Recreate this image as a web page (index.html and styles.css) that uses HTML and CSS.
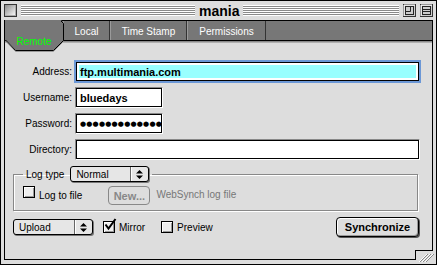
FILE: index.html
```html
<!DOCTYPE html>
<html lang="en">
  <head>
    <meta charset="UTF-8" />
    <title>mania</title>
    <link rel="stylesheet" href="styles.css">
  </head>
  <body>
    <div class="window">
      <div class="titlebar">
        <span class="closebox"></span>
        <span class="stripes left"></span>
        <span class="title">mania</span>
        <span class="stripes right"></span>
        <svg class="winbtn" width="13" height="13" viewBox="0 0 13 13">
          <rect x="0.5" y="0.5" width="12" height="12" fill="#ccc" stroke="#333" />
          <path d="M1 1h11M1 1v11" stroke="#fff" />
          <rect x="2.5" y="2.5" width="8" height="8" fill="none" stroke="#222" />
          <path d="M2.5 7.5h5v-5" fill="none" stroke="#222" />
        </svg>
        <svg class="winbtn" width="13" height="13" viewBox="0 0 13 13">
          <rect x="0.5" y="0.5" width="12" height="12" fill="#ccc" stroke="#333" />
          <path d="M1 1h11M1 1v11" stroke="#fff" />
          <rect x="2.5" y="2.5" width="8" height="8" fill="none" stroke="#222" />
          <path d="M2.5 5.5h8M2.5 7.5h8" stroke="#222" />
        </svg>
      </div>

      <div class="frame">
        <div class="tabs">
          <div class="tab active">
            <svg class="tab-shape" width="60" height="32" viewBox="0 0 60 32">
              <polygon points="0,-1 56,-1 58.5,2 58.5,19.5 48.5,29.5 10.5,29.5 0,19" fill="#777" />
              <polyline points="0.5,19 10.5,29.5 48.5,29.5 58.5,19.5 58.5,2.5 56,0" fill="none" stroke="#000" />
              <polyline points="1,20.5 10.5,30.5 48.5,30.5 57.5,21.5" fill="none" stroke="#999" />
            </svg>
            <span class="tab-label">Remote</span>
          </div>
          <div class="tab local">Local</div>
          <div class="tab stamp">Time Stamp</div>
          <div class="tab perms">Permissions</div>
          <div class="tab-fill"></div>
        </div>

        <div class="panel">
          <div class="field-row">
            <span class="label">Address:</span>
            <div class="field wide focus"><span class="sel">ftp.multimania.com</span></div>
          </div>
          <div class="field-row">
            <span class="label">Username:</span>
            <div class="field short"><span class="value">bluedays</span></div>
          </div>
          <div class="field-row">
            <span class="label">Password:</span>
            <div class="field short"><span class="value dots">●●●●●●●●●●●●●</span></div>
          </div>
          <div class="field-row">
            <span class="label">Directory:</span>
            <div class="field wide"></div>
          </div>

          <fieldset class="group">
            <legend class="group-legend">
              <span>Log type</span>
              <div class="popup log-popup">
                <span class="popup-text">Normal</span>
                <span class="popup-arrows">
                  <svg width="7" height="9" viewBox="0 0 7 9"><path d="M0 3.5L3.5 0L7 3.5ZM0 5.5L3.5 9L7 5.5Z" fill="#000" /></svg>
                </span>
              </div>
            </legend>
            <div class="group-row">
              <label class="check">
                <span class="box"></span>
                <span class="check-text">Log to file</span>
              </label>
              <button class="btn disabled">New...</button>
              <span class="hint">WebSynch log file</span>
            </div>
          </fieldset>

          <div class="bottom-row">
            <div class="popup mode-popup">
              <span class="popup-text">Upload</span>
              <span class="popup-arrows">
                <svg width="7" height="9" viewBox="0 0 7 9"><path d="M0 3.5L3.5 0L7 3.5ZM0 5.5L3.5 9L7 5.5Z" fill="#000" /></svg>
              </span>
            </div>
            <label class="check mirror">
              <span class="box">
                <svg class="tick" width="14" height="14" viewBox="0 0 14 14">
                  <path d="M2.5 6.5L5.5 10.5L12.5 1" fill="none" stroke="#000" stroke-width="2" />
                </svg>
              </span>
              <span>Mirror</span>
            </label>
            <label class="check preview">
              <span class="box"></span>
              <span>Preview</span>
            </label>
            <button class="btn primary">Synchronize</button>
          </div>
        </div>
      </div>

      <svg class="growbox" width="22" height="15" viewBox="0 0 22 15">
        <rect x="2" y="2" width="20" height="13" fill="#ddd" />
        <path d="M1 1.5h18M1.5 1v9" stroke="#000" />
        <path d="M5 13L13 5M8 13L16 5M11 13L19 5" stroke="#fff" />
        <path d="M6 13L14 5M9 13L17 5M12 13L20 5" stroke="#888" />
      </svg>
    </div>
  </body>
</html>
```

FILE: styles.css
```css
body {
  margin: 0;
  background: #fff;
  font-family: "Liberation Sans", Arial, sans-serif;
  font-size: 10px;
  color: #000;
}
.window {
  position: relative;
  width: 437px;
  height: 265px;
  box-sizing: border-box;
  border: 1px solid #000;
  background: #ddd;
  display: flex;
  flex-direction: column;
}

/* title bar */
.titlebar {
  height: 19px;
  display: flex;
  align-items: center;
  gap: 4px;
  padding: 0 3px;
}
.closebox {
  width: 13px;
  height: 13px;
  box-sizing: border-box;
  border: 1px solid #333;
  background: linear-gradient(135deg, #888, #fff);
  box-shadow: inset -1px -1px 0 #aaa;
}
.stripes {
  height: 11px;
  background: repeating-linear-gradient(to bottom, #fff 0 1px, #8a8a8a 1px 2px);
}
.stripes.left {
  width: 174px;
}
.stripes.right {
  flex: 1;
}
.title {
  font-size: 14px;
  font-weight: bold;
  width: 40px;
  text-align: center;
}
.winbtn {
  display: block;
}

/* content frame */
.frame {
  flex: 1;
  margin: 0 3px 4px 3px;
  border: 1px solid #000;
  display: flex;
  flex-direction: column;
}
.tabs {
  height: 20px;
  box-sizing: border-box;
  border-bottom: 1px solid #000;
  display: flex;
  background: #777;
}
.tab {
  box-sizing: border-box;
  border-left: 1px solid #9a9a9a;
  border-right: 1px solid #333;
  color: #fff;
  display: flex;
  align-items: center;
  justify-content: center;
  padding-top: 2px;
}
.tab.active {
  position: relative;
  z-index: 2;
  width: 58px;
  border: none;
}
.tab-shape {
  position: absolute;
  left: 0;
  top: 0;
  overflow: visible;
}
.tab-label {
  position: absolute;
  left: 0;
  right: 0;
  top: 15px;
  text-align: center;
  color: #00ff00;
  line-height: 12px;
}
.tab.local {
  width: 47px;
}
.tab.stamp {
  width: 77px;
}
.tab.perms {
  width: 79px;
}
.tab-fill {
  flex: 1;
}

.panel {
  flex: 1;
  padding-top: 20px;
  box-shadow: inset 0 1px 0 #8a8a8a, inset 0 2px 0 #b0b0b0;
}
.field-row {
  display: flex;
  align-items: center;
  margin-bottom: 5px;
}
.label {
  width: 67px;
  margin-right: 3px;
  text-align: right;
}
.field {
  height: 21px;
  box-sizing: border-box;
  border: 1px solid;
  border-color: #888 #fff #fff #888;
  box-shadow: inset 0 0 0 1px #000;
  background: #fff;
  padding: 2px;
  font-size: 11px;
  font-weight: bold;
  overflow: hidden;
  display: flex;
  align-items: center;
}
.field.wide {
  width: 345px;
}
.field.short {
  width: 88px;
}
.field.focus {
  border-color: #6b97d6;
  box-shadow: 0 0 0 1px #6b97d6, inset 0 0 0 1px #000;
}
.sel {
  display: flex;
  align-items: center;
  align-self: stretch;
  flex: 1;
  margin: 1px;
  padding-left: 1px;
  background: #99ffff;
}
.value {
  padding-left: 2px;
  white-space: nowrap;
}
.dots {
  font-family: "DejaVu Sans", sans-serif;
  font-size: 7px;
  letter-spacing: 0.2px;
}

/* log group */
.group {
  margin: 6px 14px 0 8px;
  padding: 4px 9px 5px 9px;
  border: 1px solid #888;
  box-shadow: 1px 1px 0 #fff, inset 1px 1px 0 #fff;
  min-inline-size: 0;
}
.group-legend {
  padding: 0 3px;
  display: flex;
  align-items: center;
  gap: 6px;
}
.group-row {
  display: flex;
  align-items: flex-start;
}
.check {
  display: flex;
  align-items: center;
  gap: 4px;
}
.group-row .check {
  align-items: flex-start;
}
.check-text {
  padding-top: 4px;
  line-height: 12px;
}
.box {
  position: relative;
  width: 12px;
  height: 12px;
  box-sizing: border-box;
  border: 1px solid #000;
  background: #eee;
  box-shadow: inset 1px 1px 0 #fff, inset -1px -1px 0 #999;
}
.tick {
  position: absolute;
  left: -1px;
  top: -4px;
  overflow: visible;
}
.btn {
  font-family: "Liberation Sans", Arial, sans-serif;
  font-size: 11px;
  font-weight: bold;
  background: #ddd;
  border-radius: 4px;
  padding: 0;
}
.btn.disabled {
  width: 42px;
  height: 19px;
  margin-left: 26px;
  border: 1px solid #888;
  color: #888;
}
.hint {
  margin-left: 6px;
  padding-top: 3px;
  color: #777;
}

/* popups */
.popup {
  height: 16px;
  box-sizing: border-box;
  border: 1px solid #000;
  border-radius: 3px;
  background: #e6e6e6;
  box-shadow: 1px 1px 0 #777;
  display: flex;
  align-items: center;
}
.popup-text {
  flex: 1;
  padding-left: 5px;
}
.popup-arrows {
  width: 18px;
  align-self: stretch;
  box-sizing: border-box;
  border-left: 1px solid #666;
  box-shadow: inset 1px 0 0 #fff;
  display: flex;
  align-items: center;
  justify-content: center;
}
.popup-arrows svg {
  display: block;
}
.log-popup {
  width: 79px;
}
.mode-popup {
  width: 80px;
}

/* bottom row */
.bottom-row {
  display: flex;
  align-items: center;
  margin-top: 6px;
  padding: 0 13px 0 8px;
}
.check.mirror {
  margin-left: 10px;
}
.check.preview {
  margin-left: 16px;
}
.btn.primary {
  margin-left: auto;
  width: 83px;
  height: 20px;
  border: 1px solid #000;
  color: #000;
  box-shadow: inset 1px 1px 0 #fff, inset -1px -1px 0 #999, 1px 1px 0 #555;
}

.growbox {
  position: absolute;
  right: 0;
  bottom: 0;
}
```
